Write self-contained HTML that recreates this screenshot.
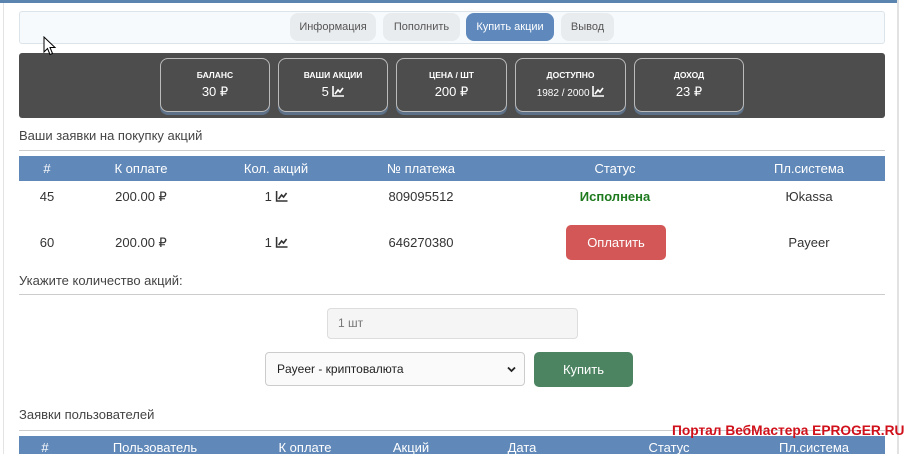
<!DOCTYPE html>
<html><head><meta charset="utf-8"><style>
*{box-sizing:border-box;margin:0;padding:0}
body{width:913px;height:454px;overflow:hidden;background:#fff;font-family:"Liberation Sans",Arial,sans-serif;color:#333;position:relative}
.a{position:absolute}
.c{text-align:center}
.btn{position:absolute;top:13px;height:28px;border-radius:8px;background:#e9ecef;color:#555;font-size:11px;line-height:28px;text-align:center}
.card{position:absolute;top:58px;height:54px;border:1px solid #bbb;border-radius:8px;box-shadow:0 3px 0 #5d7189;color:#fff;text-align:center}
.card .t{font-size:8.5px;font-weight:bold;margin-top:11px}
.card .v{font-size:13px;margin-top:4px}
.th{position:absolute;color:#fff;font-size:13px;transform:translateX(-50%);white-space:nowrap}
.td{position:absolute;color:#333;font-size:13px;transform:translateX(-50%);white-space:nowrap}
.ic{display:inline-block;vertical-align:-1px}
</style></head><body>
<div class="a" style="left:0;top:0;width:898px;height:3px;background:#5b84b1"></div>
<div class="a" style="left:3px;top:3px;width:1px;height:451px;background:#e4e4e4"></div>
<div class="a" style="left:897px;top:0;width:2px;height:454px;background:#e2e2e2"></div>

<div class="a" style="left:19px;top:11px;width:866px;height:33px;background:#f7fafc;border:1px solid #dce4ea;border-radius:3px"></div>
<div class="btn" style="left:290px;width:86px">Информация</div>
<div class="btn" style="left:383px;width:77px">Пополнить</div>
<div class="btn" style="left:466px;width:88px;background:#5f89bd;color:#fff">Купить акции</div>
<div class="btn" style="left:561px;width:53px">Вывод</div>

<div class="a" style="left:19px;top:53px;width:866px;height:65px;background:#4d4d4d;border-radius:3px"></div>
<div class="card" style="left:160px;width:110px"><div class="t">БАЛАНС</div><div class="v">30 ₽</div></div>
<div class="card" style="left:278px;width:110px"><div class="t">ВАШИ АКЦИИ</div><div class="v">5 <svg class="ic" width="12" height="11" viewBox="0 0 12 11"><path d="M1 0V10H12M3 8L6 4L8 6L11 2" stroke="#fff" stroke-width="1.6" fill="none"/></svg></div></div>
<div class="card" style="left:396px;width:111px"><div class="t">ЦЕНА / ШТ</div><div class="v">200 ₽</div></div>
<div class="card" style="left:515px;width:111px"><div class="t">ДОСТУПНО</div><div class="v" style="font-size:10px;margin-top:6px">1982 / 2000 <svg class="ic" width="12" height="11" viewBox="0 0 12 11"><path d="M1 0V10H12M3 8L6 4L8 6L11 2" stroke="#fff" stroke-width="1.6" fill="none"/></svg></div></div>
<div class="card" style="left:634px;width:110px"><div class="t">ДОХОД</div><div class="v">23 ₽</div></div>

<div class="a" style="left:19px;top:128px;font-size:13px;color:#444">Ваши заявки на покупку акций</div>
<div class="a" style="left:19px;top:150px;width:866px;height:1px;background:#ccc"></div>
<div class="a" style="left:19px;top:156px;width:866px;height:25px;background:#6088b8"></div>
<div class="th" style="left:47px;top:161px">#</div>
<div class="th" style="left:141px;top:161px">К оплате</div>
<div class="th" style="left:276px;top:161px">Кол. акций</div>
<div class="th" style="left:421px;top:161px">№ платежа</div>
<div class="th" style="left:615px;top:161px">Статус</div>
<div class="th" style="left:809px;top:161px">Пл.система</div>

<div class="td" style="left:47px;top:189px">45</div>
<div class="td" style="left:141px;top:189px">200.00 ₽</div>
<div class="td" style="left:276px;top:189px">1 <svg class="ic" width="12" height="11" viewBox="0 0 12 11"><path d="M1 0V10H12M3 8L6 4L8 6L11 2" stroke="#333" stroke-width="1.6" fill="none"/></svg></div>
<div class="td" style="left:421px;top:189px">809095512</div>
<div class="td" style="left:615px;top:189px;color:#1e7a1e;font-weight:bold">Исполнена</div>
<div class="td" style="left:809px;top:189px">Юkassa</div>

<div class="td" style="left:47px;top:235px">60</div>
<div class="td" style="left:141px;top:235px">200.00 ₽</div>
<div class="td" style="left:276px;top:235px">1 <svg class="ic" width="12" height="11" viewBox="0 0 12 11"><path d="M1 0V10H12M3 8L6 4L8 6L11 2" stroke="#333" stroke-width="1.6" fill="none"/></svg></div>
<div class="td" style="left:421px;top:235px">646270380</div>
<div class="a c" style="left:566px;top:225px;width:100px;height:35px;background:#d25756;border-radius:5px;color:#fff;font-size:13px;line-height:35px">Оплатить</div>
<div class="td" style="left:809px;top:235px">Payeer</div>

<div class="a" style="left:19px;top:273px;font-size:13px;color:#444">Укажите количество акций:</div>
<div class="a" style="left:19px;top:294px;width:866px;height:1px;background:#ccc"></div>
<div class="a" style="left:327px;top:308px;width:251px;height:31px;background:#f5f5f5;border:1px solid #ddd;border-radius:4px;font-size:12px;color:#777;line-height:29px;padding-left:10px">1 шт</div>
<div class="a" style="left:265px;top:352px;width:260px;height:34px;background:#fafafa;border:1px solid #ccc;border-radius:4px;font-size:12px;color:#222;line-height:32px;padding-left:11px">Payeer - криптовалюта<svg style="position:absolute;right:8px;top:13px" width="9" height="7" viewBox="0 0 9 7"><path d="M1 1.5L4.5 5L8 1.5" stroke="#222" stroke-width="1.8" fill="none"/></svg></div>
<div class="a c" style="left:534px;top:352px;width:99px;height:35px;background:#4c8462;border-radius:5px;color:#fff;font-size:13px;line-height:35px">Купить</div>

<div class="a" style="left:19px;top:407px;font-size:13px;color:#444">Заявки пользователей</div>
<div class="a" style="left:19px;top:430px;width:866px;height:1px;background:#ccc"></div>
<div class="a" style="left:19px;top:436px;width:866px;height:18px;background:#6088b8"></div>
<div class="th" style="left:45px;top:440px">#</div>
<div class="th" style="left:155px;top:440px">Пользователь</div>
<div class="th" style="left:305px;top:440px">К оплате</div>
<div class="th" style="left:411px;top:440px">Акций</div>
<div class="th" style="left:522px;top:440px">Дата</div>
<div class="th" style="left:669px;top:440px">Статус</div>
<div class="th" style="left:814px;top:440px">Пл.система</div>

<div class="a" style="left:672px;top:422px;font-size:14px;font-weight:bold;color:#d0101a;white-space:nowrap;transform:scaleX(0.98);transform-origin:left top">Портал ВебМастера EPROGER.RU</div>

<svg class="a" style="left:43px;top:36px" width="14" height="20" viewBox="0 0 14 20"><path d="M1 1V16L4.5 12.5L7 18.5L9.5 17.5L7 11.5H12Z" fill="#fff" stroke="#000" stroke-width="1"/></svg>
</body></html>
